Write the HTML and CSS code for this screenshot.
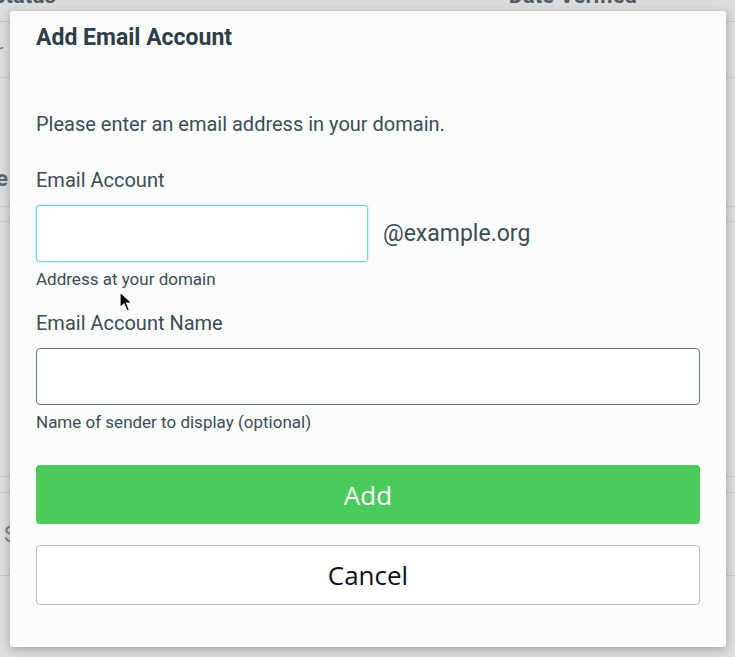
FILE: index.html
```html
<!DOCTYPE html>
<html>
<head>
<meta charset="utf-8">
<link rel="stylesheet" href="styles.css">
</head>
<body>
<div class="page">
  <div class="thead">
    <span class="th th-status">Status</span>
    <span class="th th-date">Date Verified</span>
  </div>
  <div class="row r1"><span class="cell-left">r</span></div>
  <div class="row r2"><span class="cell-left bold">e</span></div>
  <div class="row r3"></div>
  <div class="row r4"></div>
  <div class="row r5"></div>
  <div class="row r6"><span class="cell-left s">S</span></div>
  <div class="row r7"></div>
</div>

<div class="modal">
  <h2 class="title">Add Email Account</h2>
  <p class="intro">Please enter an email address in your domain.</p>
  <label class="label first">Email Account</label>
  <div class="addr-row">
    <input class="input input-focus" type="text">
    <span class="domain">@example.org</span>
  </div>
  <div class="help">Address at your domain</div>
  <label class="label second">Email Account Name</label>
  <input class="input input-wide" type="text">
  <div class="help">Name of sender to display (optional)</div>
  <button class="btn btn-add">Add</button>
  <button class="btn btn-cancel">Cancel</button>
</div>

<svg class="cursor" width="14" height="22" viewBox="0 0 14 22">
  <path d="M1 1 L1 17 L5 13 L8 20 L10.5 19 L7.5 12 L13 12 Z" fill="#000" stroke="#fff" stroke-width="1.2" stroke-linejoin="round"/>
</svg>
</body>
</html>
```

FILE: styles.css
```css
* { box-sizing: border-box; }
html, body {
  margin: 0;
  padding: 0;
  width: 735px;
  height: 657px;
  overflow: hidden;
  background: #dcdcdc;
  font-family: Roboto, "Liberation Sans", sans-serif;
}
.page {
  position: relative;
  width: 735px;
}
.thead {
  height: 22px;
  border-bottom: 1px solid #c6c6c6;
  display: flex;
  align-items: flex-end;
  position: relative;
}
.th {
  font-weight: 700;
  font-size: 22px;
  line-height: 22px;
  color: #525c66;
  margin-bottom: 14px;
}
.th-status { margin-left: -8px; }
.th-date { margin-left: auto; margin-right: 98px; }
.row {
  border-bottom: 1px solid #c8c8c8;
  display: flex;
  align-items: center;
  font-size: 22px;
  color: #7a7a7a;
}
.r1 { height: 56px; padding-top: 4px; }
.r2 { height: 129px; align-items: flex-start; padding-top: 88px; }
.r3 { height: 15px; }
.r4 { height: 255px; }
.r5 { height: 16px; }
.r6 { height: 83px; }
.r7 { height: 81px; border-bottom: none; }
.cell-left { margin-left: -4px; }
.cell-left.bold { font-weight: 700; color: #60686e; margin-left: -4px; }
.cell-left.s { margin-left: 4px; color: #808080; }

.modal {
  position: absolute;
  left: 10px;
  top: 11px;
  width: 716px;
  height: 636px;
  background: #fbfdfd;
  border-radius: 3px;
  box-shadow: 0 2px 8px rgba(0,0,0,0.28);
  padding: 13px 26px 0 26px;
  display: flex;
  flex-direction: column;
  align-items: flex-start;
  color: #3d4b55;
}
.title {
  margin: 0;
  font-size: 23px;
  line-height: 28px;
  font-weight: 700;
  color: #2e3d48;
}
.intro {
  margin: 60px 0 0 0;
  font-size: 20px;
  line-height: 24px;
}
.label {
  font-size: 20px;
  line-height: 24px;
  display: block;
}
.label.first { margin-top: 32px; }
.label.second { margin-top: 22px; }
.addr-row {
  display: flex;
  align-items: center;
  gap: 15px;
  margin-top: 13px;
}
.input {
  display: block;
  height: 57px;
  background: #fff;
  border-radius: 4px;
  padding: 0 12px;
  font: inherit;
  outline: none;
}
.input-focus {
  width: 332px;
  border: 1px solid #7ccde0;
  box-shadow: 0 0 3px rgba(100, 190, 220, 0.5);
}
.domain {
  font-size: 23px;
  line-height: 26px;
}
.input-wide {
  width: 664px;
  margin-top: 13px;
  border: 1px solid #66747c;
}
.help {
  margin-top: 7px;
  font-size: 17px;
  line-height: 20px;
  color: #3d4b55;
}
.btn {
  width: 664px;
  border-radius: 4px;
  font-family: "Open Sans", "Noto Sans", sans-serif;
  font-size: 26px;
  cursor: pointer;
}
.btn-add {
  height: 59px;
  margin-top: 33px;
  background: #4bcb5b;
  border: none;
  color: #fff;
}
.btn-cancel {
  height: 60px;
  margin-top: 21px;
  background: #fff;
  border: 1px solid #b4bcc2;
  color: #111;
}
.cursor {
  position: absolute;
  left: 119px;
  top: 291px;
}
```
